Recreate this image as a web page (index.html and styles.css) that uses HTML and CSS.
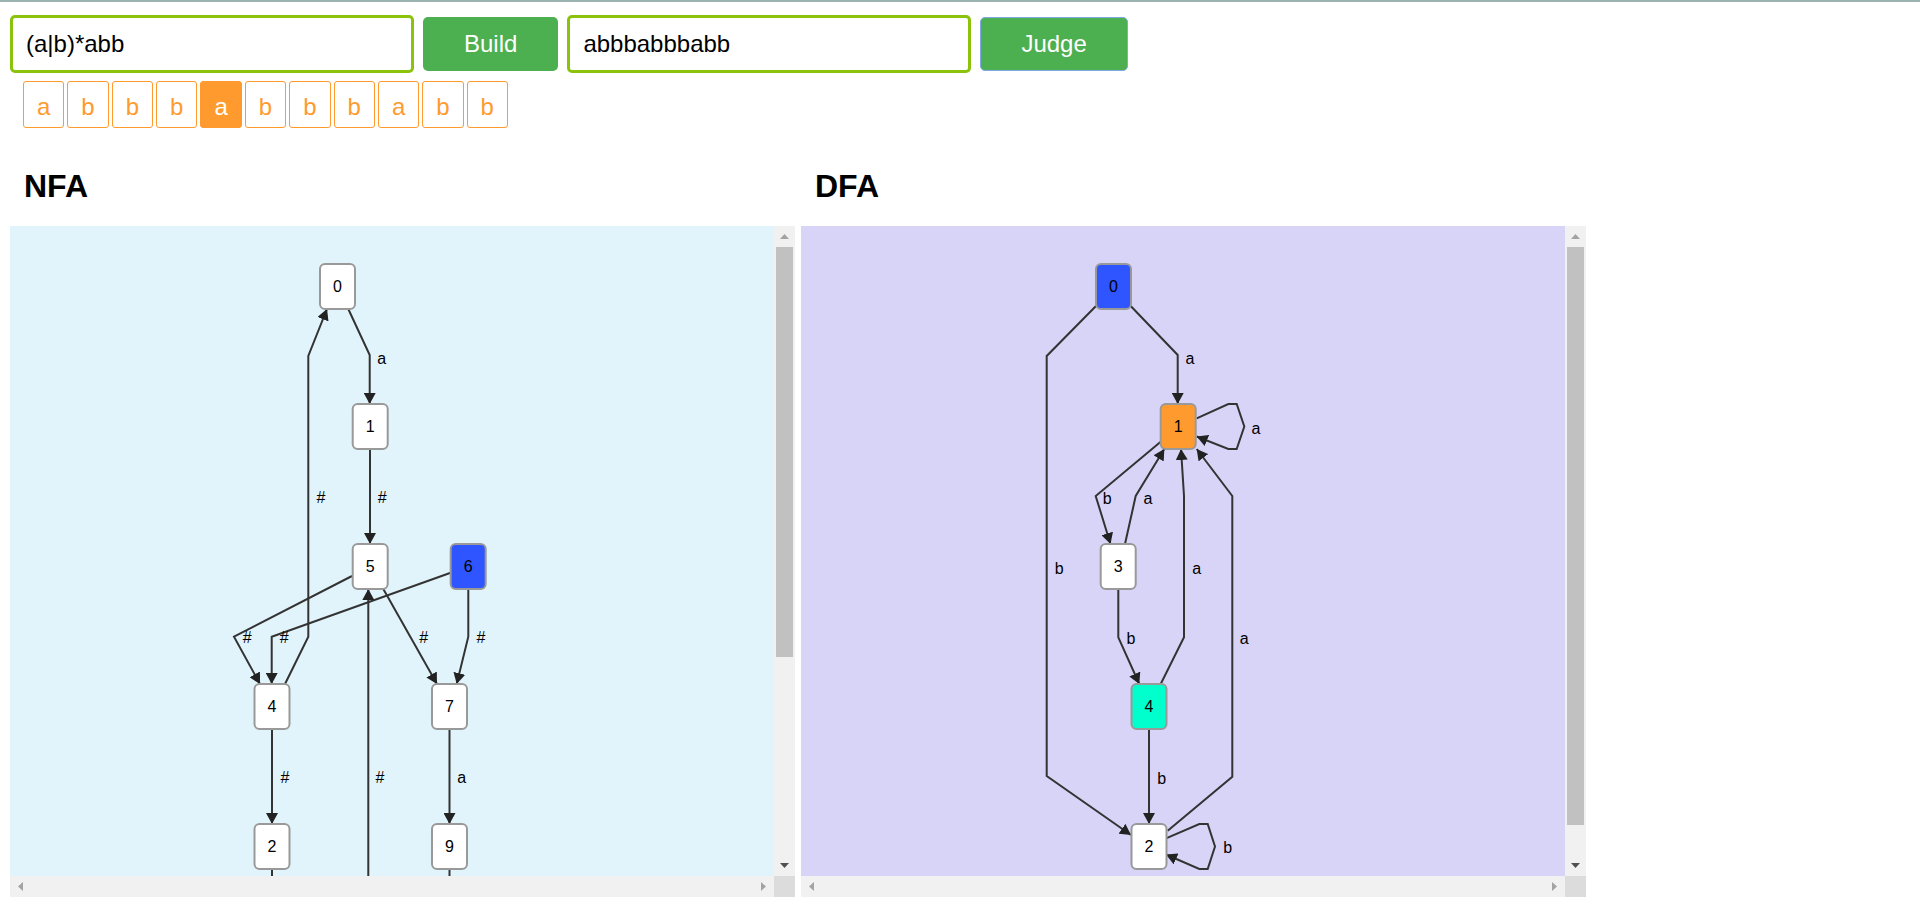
FILE: index.html
```html
<!DOCTYPE html>
<html>
<head>
<meta charset="utf-8">
<title>Regex to NFA / DFA</title>
<link rel="stylesheet" href="styles.css">
</head>
<body>
<div class="topline"></div>
<div class="toolbar">
  <input class="field" type="text" value="(a|b)*abb">
  <button class="btn">Build</button>
  <input class="field" type="text" value="abbbabbbabb">
  <button class="btn btn-focus">Judge</button>
</div>
<div class="chars">
  <span class="ch">a</span><span class="ch">b</span><span class="ch">b</span><span class="ch">b</span><span class="ch active">a</span><span class="ch">b</span><span class="ch">b</span><span class="ch">b</span><span class="ch">a</span><span class="ch">b</span><span class="ch">b</span>
</div>
<div class="panels">
  <section class="col">
    <h1 class="title">NFA</h1>
    <div class="panel">
      <div class="view nfa">
        <svg class="graph" width="764" height="966" viewBox="0 0 764 966">
          <defs>
            <marker id="arrN" viewBox="0 0 10 10" refX="10" refY="5" markerUnits="userSpaceOnUse" markerWidth="11" markerHeight="12" preserveAspectRatio="none" orient="auto">
              <path d="M0,0 L10,5 L0,10 z" fill="#222"/>
            </marker>
          </defs>
          <g class="edges" marker-end="url(#arrN)">
            <polyline points="338.3,83 359.7,129 359.7,178"/>
            <polyline points="360,223 360,318"/>
            <polyline points="275,458 298.3,410.7 298.3,130 317,83"/>
            <polyline points="342,350 224,410.7 250,458"/>
            <polyline points="440.7,346.7 261.7,410.7 261.7,458"/>
            <polyline points="373.3,363 427,458"/>
            <polyline points="458.3,363 458.3,410.7 446.7,458"/>
            <polyline points="262,503 262,598"/>
            <polyline points="439.5,503 439.5,598"/>
            <polyline points="358.3,760 358.3,363"/>
          </g>
          <g class="edges">
            <polyline points="262,643 262,760"/>
            <polyline points="439.5,643 439.5,760"/>
          </g>
          <g class="elabels">
            <text x="371.7" y="132">a</text>
            <text x="372.3" y="271.7">#</text>
            <text x="311" y="271.7">#</text>
            <text x="237.3" y="411.7">#</text>
            <text x="274.3" y="411.7">#</text>
            <text x="413.7" y="411.7">#</text>
            <text x="471" y="411.7">#</text>
            <text x="275" y="551.7">#</text>
            <text x="451.7" y="551.7">a</text>
            <text x="370" y="551.7">#</text>
          </g>
          <g class="nodes">
            <rect x="310" y="38" width="35" height="45" rx="5"/><text x="327.5" y="60.5">0</text>
            <rect x="342.7" y="178" width="35" height="45" rx="5"/><text x="360.2" y="200.5">1</text>
            <rect x="342.7" y="318" width="35" height="45" rx="5"/><text x="360.2" y="340.5">5</text>
            <rect class="start" x="440.7" y="318" width="35" height="45" rx="5"/><text x="458.2" y="340.5">6</text>
            <rect x="244.5" y="458" width="35" height="45" rx="5"/><text x="262" y="480.5">4</text>
            <rect x="422" y="458" width="35" height="45" rx="5"/><text x="439.5" y="480.5">7</text>
            <rect x="244.5" y="598" width="35" height="45" rx="5"/><text x="262" y="620.5">2</text>
            <rect x="422" y="598" width="35" height="45" rx="5"/><text x="439.5" y="620.5">9</text>
          </g>
        </svg>
      </div>
      <div class="vbar">
        <div class="sbtn"><svg width="9" height="5" viewBox="0 0 9 5"><polygon points="0,5 4.5,0 9,5" class="arr-off"/></svg></div>
        <div class="vtrack"><div class="vthumb nfa-thumb"></div></div>
        <div class="sbtn"><svg width="9" height="5" viewBox="0 0 9 5"><polygon points="0,0 4.5,5 9,0" class="arr-on"/></svg></div>
      </div>
      <div class="hbar">
        <div class="sbtn"><svg width="5" height="9" viewBox="0 0 5 9"><polygon points="5,0 0,4.5 5,9" class="arr-off"/></svg></div>
        <div class="htrack"></div>
        <div class="sbtn"><svg width="5" height="9" viewBox="0 0 5 9"><polygon points="0,0 5,4.5 0,9" class="arr-off"/></svg></div>
      </div>
      <div class="corner"></div>
    </div>
  </section>
  <section class="col">
    <h1 class="title">DFA</h1>
    <div class="panel">
      <div class="view dfa">
        <svg class="graph" width="764" height="684" viewBox="0 0 764 684">
          <defs>
            <marker id="arrD" viewBox="0 0 10 10" refX="10" refY="5" markerUnits="userSpaceOnUse" markerWidth="11" markerHeight="12" preserveAspectRatio="none" orient="auto">
              <path d="M0,0 L10,5 L0,10 z" fill="#222"/>
            </marker>
          </defs>
          <g class="edges" marker-end="url(#arrD)">
            <polyline points="329.7,80 376.7,129 376.7,178"/>
            <polyline points="295,80 245.7,130 245.7,550 330,609"/>
            <polyline points="395.7,192.3 427.3,178 435.7,178 443.3,200.5 435.7,223 427.3,223 395.7,210.5"/>
            <polyline points="359.7,215.7 294.7,270 309.5,318"/>
            <polyline points="324,318 334.7,270 363.3,223"/>
            <polyline points="359.7,458 383,411.3 383,270 380,223"/>
            <polyline points="366.7,604.7 431.3,550.7 431.3,270 395.7,223"/>
            <polyline points="317.3,363 317.3,411.3 338.3,458"/>
            <polyline points="348,503 348,598"/>
            <polyline points="365,612.3 398.3,598 406.7,598 414,620.5 406.7,643 398.3,643 365,628.5"/>
          </g>
          <g class="elabels">
            <text x="389" y="132.3">a</text>
            <text x="258.3" y="342.3">b</text>
            <text x="455" y="202.3">a</text>
            <text x="306.3" y="272.3">b</text>
            <text x="347" y="272.3">a</text>
            <text x="395.7" y="342.3">a</text>
            <text x="443.3" y="412.3">a</text>
            <text x="330" y="412.3">b</text>
            <text x="360.7" y="552.3">b</text>
            <text x="426.7" y="621.3">b</text>
          </g>
          <g class="nodes">
            <rect class="start" x="295" y="38" width="35" height="45" rx="5"/><text x="312.5" y="60.5">0</text>
            <rect class="current" x="359.7" y="178" width="35" height="45" rx="5"/><text x="377.2" y="200.5">1</text>
            <rect x="299.7" y="318" width="35" height="45" rx="5"/><text x="317.2" y="340.5">3</text>
            <rect class="accept" x="330.5" y="458" width="35" height="45" rx="5"/><text x="348" y="480.5">4</text>
            <rect x="330.5" y="598" width="35" height="45" rx="5"/><text x="348" y="620.5">2</text>
          </g>
        </svg>
      </div>
      <div class="vbar">
        <div class="sbtn"><svg width="9" height="5" viewBox="0 0 9 5"><polygon points="0,5 4.5,0 9,5" class="arr-off"/></svg></div>
        <div class="vtrack"><div class="vthumb dfa-thumb"></div></div>
        <div class="sbtn"><svg width="9" height="5" viewBox="0 0 9 5"><polygon points="0,0 4.5,5 9,0" class="arr-on"/></svg></div>
      </div>
      <div class="hbar">
        <div class="sbtn"><svg width="5" height="9" viewBox="0 0 5 9"><polygon points="5,0 0,4.5 5,9" class="arr-off"/></svg></div>
        <div class="htrack"></div>
        <div class="sbtn"><svg width="5" height="9" viewBox="0 0 5 9"><polygon points="0,0 5,4.5 0,9" class="arr-off"/></svg></div>
      </div>
      <div class="corner"></div>
    </div>
  </section>
</div>
</body>
</html>
```

FILE: styles.css
```css
* { box-sizing: border-box; }

html, body {
  margin: 0;
  padding: 0;
  background: #ffffff;
  font-family: "Liberation Sans", Arial, sans-serif;
  color: #000;
  overflow: hidden;
}

.topline {
  height: 2px;
  background: #9bb3ae;
}

.toolbar {
  display: flex;
  align-items: center;
  gap: 9px;
  padding: 13px 10px 0 10px;
}

.field {
  width: 404px;
  height: 58px;
  border: 3px solid #8bc20c;
  border-radius: 5px;
  padding: 0 13px;
  font-family: "Liberation Sans", Arial, sans-serif;
  font-size: 24px;
  color: #000;
  background: #fff;
  outline: none;
}

.btn {
  height: 54px;
  padding: 0 41px;
  border: none;
  border-radius: 5px;
  background: #4caf50;
  color: #fff;
  font-family: "Liberation Sans", Arial, sans-serif;
  font-size: 24px;
}

.btn-focus {
  border: 1px solid #7ea8e6;
  padding: 0 40px;
}

.chars {
  display: flex;
  gap: 3px;
  margin-top: 8px;
  padding-left: 23px;
}

.ch {
  display: flex;
  align-items: center;
  justify-content: center;
  height: 47px;
  padding: 4px 13px 0 13px;
  border: 1px solid #ff9a2e;
  border-radius: 3px;
  color: #ff9a2e;
  font-size: 24px;
}

.ch.active {
  background: #ff9a2e;
  color: #fff;
}

.panels {
  display: flex;
  gap: 6px;
  padding: 0 10px;
}

.col {
  width: 785px;
}

.title {
  margin: 38px 0 20px 0;
  padding-left: 14px;
  font-size: 32px;
  line-height: 40px;
  font-weight: bold;
}

.panel {
  display: grid;
  grid-template-columns: 1fr 21px;
  grid-template-rows: 1fr 21px;
  height: 671px;
}

.view {
  overflow: hidden;
}

.nfa { background: #e2f4fb; }
.dfa { background: #d7d4f7; }

.graph { display: block; }

.edges polyline {
  fill: none;
  stroke: #333;
  stroke-width: 2;
}

.elabels text,
.nodes text {
  font-family: "Liberation Sans", Arial, sans-serif;
  font-size: 16px;
  fill: #000;
  text-anchor: middle;
  dominant-baseline: central;
}

.nodes rect {
  fill: #fff;
  stroke: #999;
  stroke-width: 2;
}

.nodes rect.start { fill: #2e55ff; }
.nodes rect.current { fill: #ff9a2e; }
.nodes rect.accept { fill: #00ffcc; }

.vbar {
  display: flex;
  flex-direction: column;
  background: #f1f1f1;
}

.hbar {
  display: flex;
  background: #f1f1f1;
}

.sbtn {
  width: 21px;
  height: 21px;
  flex: none;
  display: flex;
  align-items: center;
  justify-content: center;
}

.sbtn svg { display: block; }

.arr-off { fill: #a3a3a3; }
.arr-on { fill: #505050; }

.vtrack {
  flex: 1;
  padding: 0 2px;
}

.vthumb {
  background: #c1c1c1;
}

.nfa-thumb { height: 410px; }
.dfa-thumb { height: 578px; }

.htrack { flex: 1; }

.corner {
  background: #dcdcdc;
}
```
